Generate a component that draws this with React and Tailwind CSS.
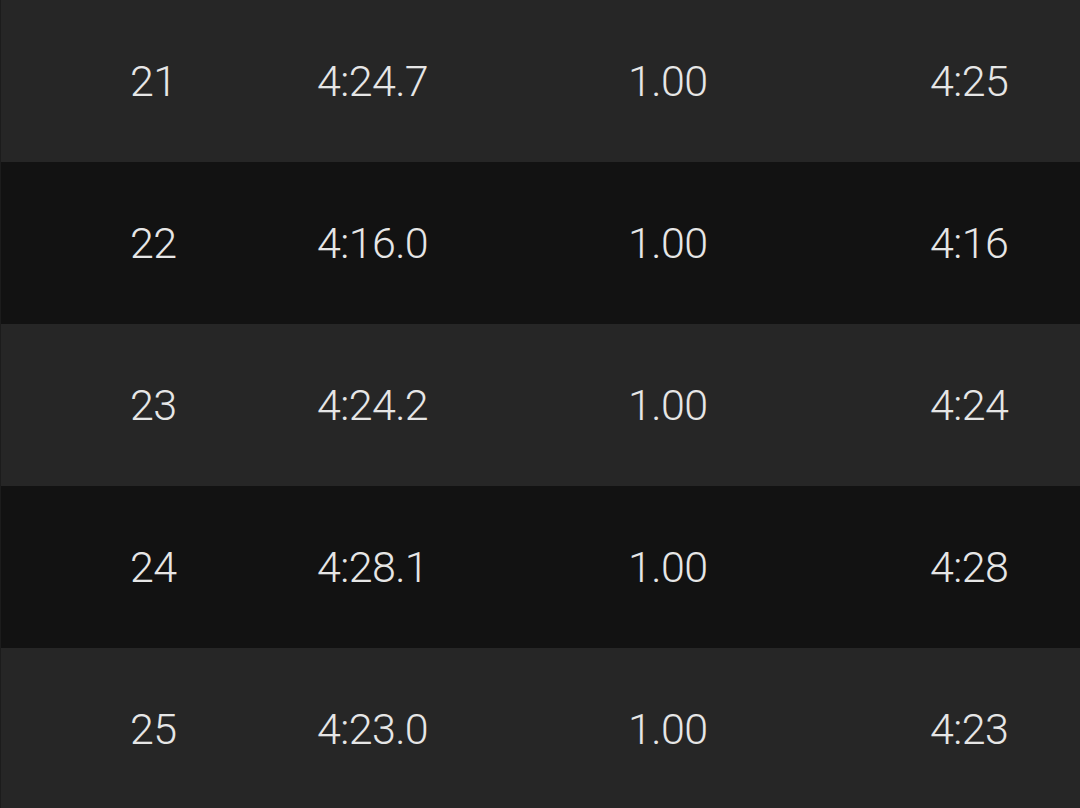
const rows = [
  ["21", "4:24.7", "1.00", "4:25"],
  ["22", "4:16.0", "1.00", "4:16"],
  ["23", "4:24.2", "1.00", "4:24"],
  ["24", "4:28.1", "1.00", "4:28"],
  ["25", "4:23.0", "1.00", "4:23"],
];

export default function App() {
  return (
    <div
      className="h-[808px] w-[1080px] overflow-hidden bg-[#121212]"
      style={{ fontFamily: "Roboto, 'Liberation Sans', sans-serif" }}
    >
      {rows.map((row, i) => (
        <div
          key={row[0]}
          className={`grid h-[162px] grid-cols-[187px_311px_302px_1fr] items-center border-l border-[#1c1c1c] pl-[129px] text-[43px] font-light tracking-[-0.6px] text-[#e6e6e6] ${
            i % 2 === 0 ? "bg-[#262626]" : "bg-[#121212]"
          }`}
        >
          {row.map((cell, j) => (
            <span key={j}>{cell}</span>
          ))}
        </div>
      ))}
    </div>
  );
}
